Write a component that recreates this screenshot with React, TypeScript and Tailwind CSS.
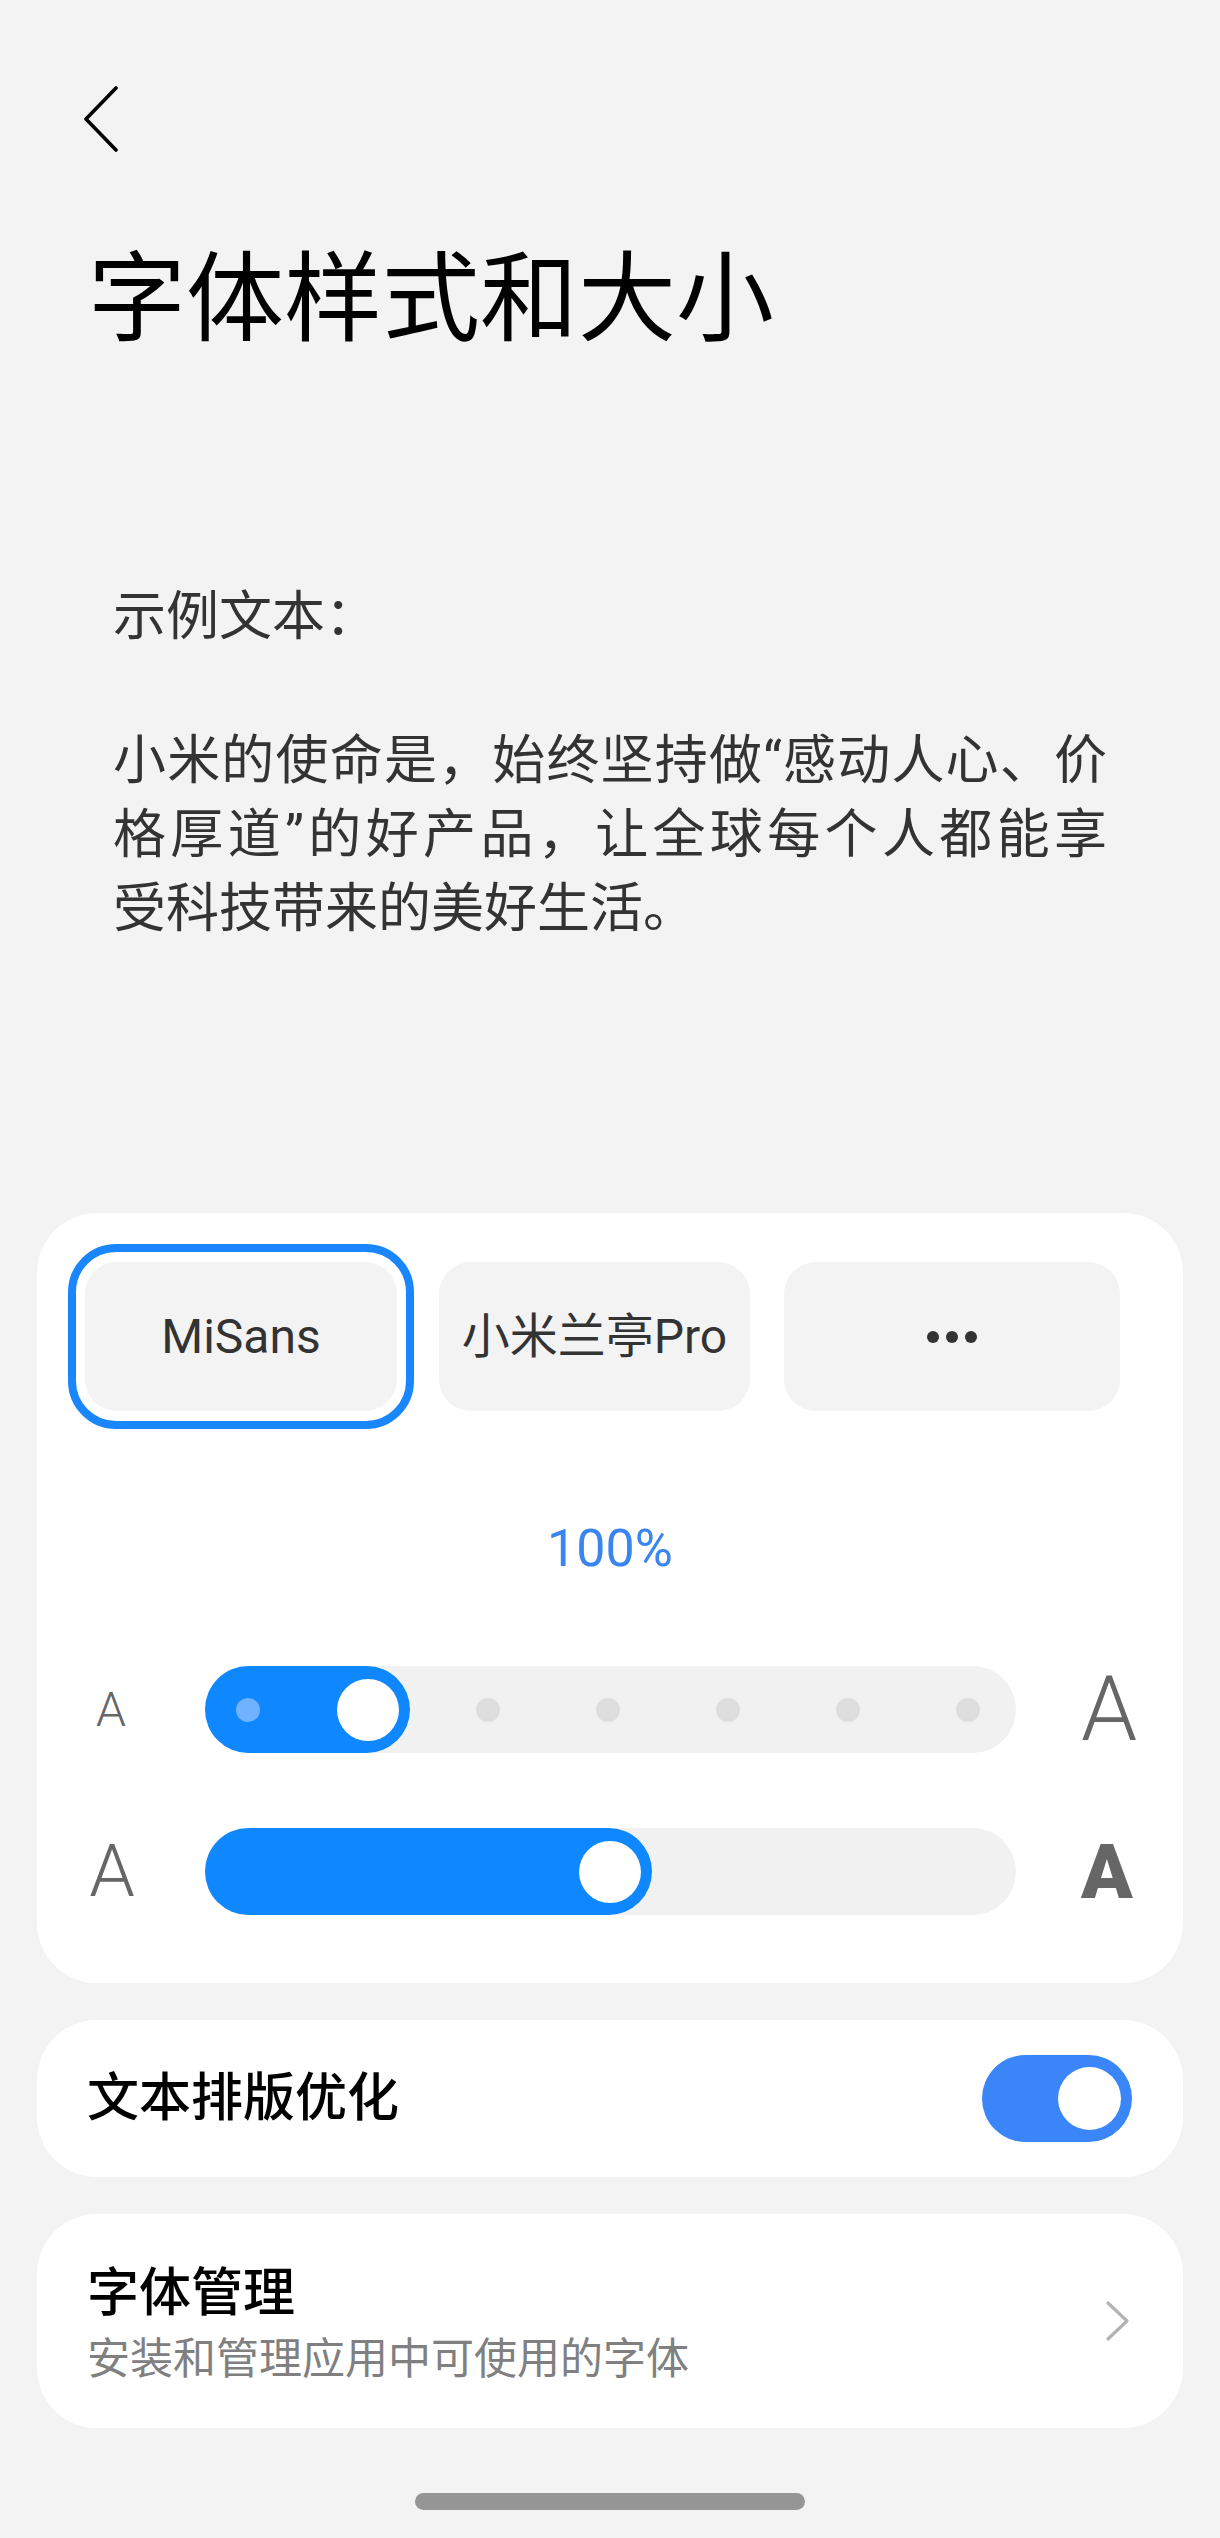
import React from "react";

const FONT = "[font-family:Roboto,'Noto_Sans_CJK_SC',sans-serif]";

function BackIcon() {
  return (
    <svg width="36" height="66" viewBox="0 0 36 66" fill="none">
      <polyline points="33,2 3,33 33,64" stroke="#000" strokeWidth="3.6" strokeLinecap="round" strokeLinejoin="round" />
    </svg>
  );
}

function ChevronRight() {
  return (
    <svg width="25" height="42" viewBox="0 0 25 42" fill="none">
      <polyline points="3,3 22,21 3,39" stroke="#b3b3b3" strokeWidth="3.2" strokeLinecap="round" strokeLinejoin="round" />
    </svg>
  );
}

/** 字号档位滑块：7 个档位，当前在第 2 档 */
function StepSlider() {
  const stops = [43, 163, 283, 403, 523, 643, 763];
  return (
    <div className="relative h-[87px] w-[811px] rounded-full bg-[#f1f1f1]">
      <div className="absolute inset-y-0 left-0 w-[205px] rounded-full bg-[#0f87ff]" />
      {stops.map((x, i) =>
        i === 1 ? null : (
          <span
            key={x}
            className={
              "absolute top-1/2 size-[24px] -translate-x-1/2 -translate-y-1/2 rounded-full " +
              (i === 0 ? "bg-[#71b2ff]" : "bg-[#dddddd]")
            }
            style={{ left: x }}
          />
        )
      )}
      <span className="absolute left-[132px] top-1/2 size-[62px] -translate-y-1/2 rounded-full bg-white" />
    </div>
  );
}

/** 字重滑块：连续值，当前 50% */
function WeightSlider() {
  return (
    <div className="relative h-[87px] w-[811px] rounded-full bg-[#f1f1f1]">
      <div className="absolute inset-y-0 left-0 w-[447px] rounded-full bg-[#0f87ff]" />
      <span className="absolute left-[374px] top-1/2 size-[62px] -translate-y-1/2 rounded-full bg-white" />
    </div>
  );
}

function FontChip({ children, width }: { children: React.ReactNode; width: string }) {
  return (
    <div
      className={
        "flex h-[149px] items-center justify-center rounded-[32px] bg-[#f3f3f3] text-[48px] text-[#333] " + width
      }
    >
      {children}
    </div>
  );
}

export default function App() {
  return (
    <div className={"min-h-[2538px] bg-[#f3f3f3] pb-[28px] " + FONT}>
      <div className="pl-[83px] pt-[86px]">
        <BackIcon />
      </div>

      <h1 className="mt-[99px] pl-[88px] text-[98px] font-normal leading-[98px] text-black">字体样式和大小</h1>

      <p className="mt-[226px] pl-[113px] text-[53px] leading-[74px] text-[#333] [font-family:'Noto_Sans_CJK_SC',sans-serif]">
        示例文本：
      </p>

      <div className="mt-[75px] w-[1107px] pl-[113px] text-[53px] leading-[74px] text-[#333]">
        <div className="[text-align-last:justify] text-justify">小米的使命是，始终坚持做“感动人心、价</div>
        <div className="[text-align-last:justify] text-justify">格厚道”的好产品，让全球每个人都能享</div>
        <div>受科技带来的美好生活。</div>
      </div>

      <section className="mx-[37px] mt-[267px] rounded-[60px] bg-white pb-[68px] pt-[31px]">
        <div className="flex items-center pl-[31px]">
          <div className="rounded-[48px] border-[8px] border-[#1a86fb] px-[9px] py-[10px]">
            <FontChip width="w-[312px]">MiSans</FontChip>
          </div>
          <div className="ml-[25px]">
            <FontChip width="w-[311px]">小米兰亭Pro</FontChip>
          </div>
          <div className="ml-[34px]">
            <FontChip width="w-[336px]">
              <span className="flex gap-[7px]">
                <span className="size-[12px] rounded-full bg-[#333]" />
                <span className="size-[12px] rounded-full bg-[#333]" />
                <span className="size-[12px] rounded-full bg-[#333]" />
              </span>
            </FontChip>
          </div>
        </div>

        <p className="mt-[90px] text-center text-[52px] leading-[60px] text-[#3b85f0]">100%</p>

        <div className="mt-[87px] flex h-[87px] items-center">
          <span className="w-[148px] text-center text-[48px] font-light leading-none text-[#666]">A</span>
          <div className="ml-[20px]">
            <StepSlider />
          </div>
          <span className="ml-[53px] w-[80px] text-center text-[90px] font-light leading-none text-[#666]">A</span>
        </div>

        <div className="mt-[75px] flex h-[87px] items-center">
          <span className="w-[150px] text-center text-[73px] font-light leading-none text-[#666]">A</span>
          <div className="ml-[18px]">
            <WeightSlider />
          </div>
          <span className="ml-[51px] w-[80px] text-center text-[76px] font-black leading-none text-[#666]">A</span>
        </div>
      </section>

      <section className="mx-[37px] mt-[37px] flex h-[157px] items-center justify-between rounded-[60px] bg-white pl-[50px] pr-[51px]">
        <span className="text-[52px] font-medium text-black">文本排版优化</span>
        <div className="flex h-[87px] w-[150px] items-center justify-end rounded-full bg-[#3a86f8] pr-[11px]">
          <span className="size-[63px] rounded-full bg-white" />
        </div>
      </section>

      <section className="mx-[37px] mt-[37px] flex h-[214px] items-center justify-between rounded-[60px] bg-white pl-[50px] pr-[53px]">
        <div className="pt-[6px]">
          <p className="text-[52px] font-medium leading-[62px] text-black">字体管理</p>
          <p className="mt-[8px] text-[43px] leading-[52px] text-[#808080]">安装和管理应用中可使用的字体</p>
        </div>
        <ChevronRight />
      </section>

      <div className="mx-auto mt-[65px] h-[17px] w-[390px] rounded-full bg-[#959595]" />
    </div>
  );
}
